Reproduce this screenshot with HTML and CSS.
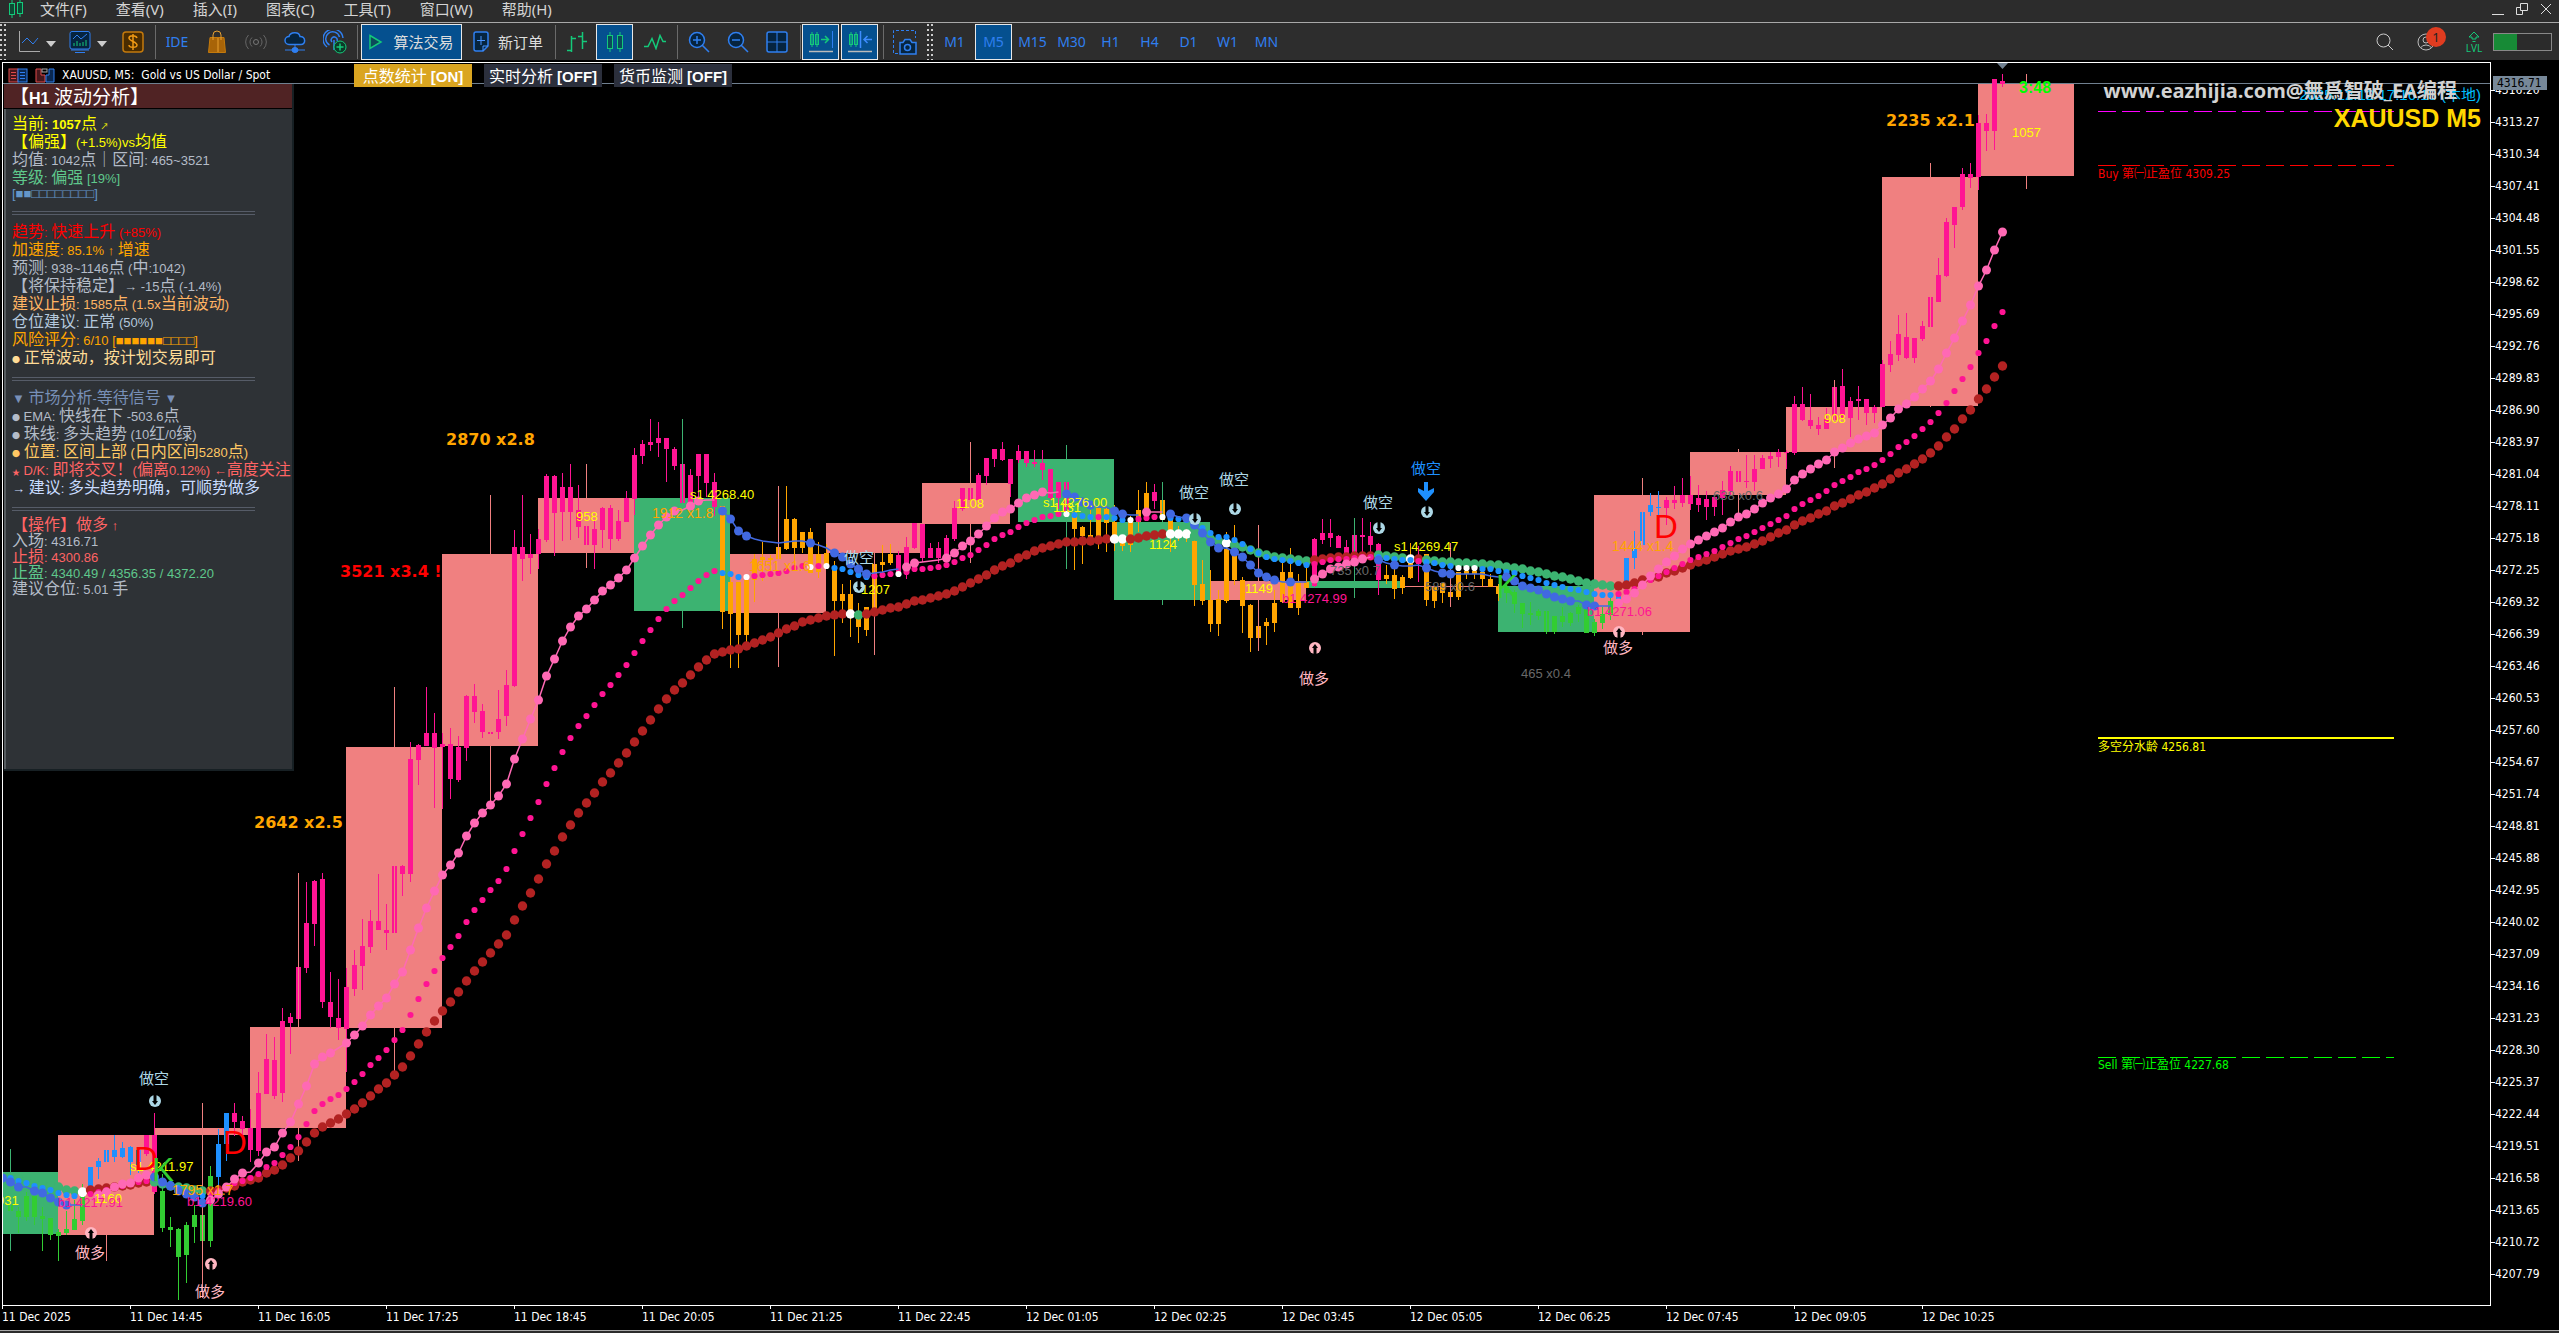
FILE: index.html
```html
<!DOCTYPE html>
<html lang="zh-CN">
<head>
<meta charset="utf-8">
<title>XAUUSD, M5</title>
<link rel="stylesheet" href="styles.css">
</head>
<body>
<header class="menubar">
  <svg class="logo" width="16" height="18" viewBox="0 0 16 18"><path d="M4 0v18M12 0v17" stroke="#14c97a"/><rect x="1.500" y="3.500" width="5" height="11" fill="#0c4a34" stroke="#14c97a"/><rect x="9.500" y="2.500" width="5" height="11" fill="#0c4a34" stroke="#14c97a"/></svg>
  <nav class="menus">
    <a href="#">文件(F)</a><a href="#">查看(V)</a><a href="#">插入(I)</a><a href="#">图表(C)</a><a href="#">工具(T)</a><a href="#">窗口(W)</a><a href="#">帮助(H)</a>
  </nav>
  <div class="winctl">
    <button aria-label="最小化"><svg width="14" height="14"><path d="M1 12.500h12" stroke="#ddd" fill="none"/></svg></button>
    <button aria-label="还原"><svg width="14" height="14"><path d="M5.500 1.500h7v7h-7zM5.500 5.500h-4v7h6v-4" stroke="#ddd" fill="none"/></svg></button>
    <button aria-label="关闭"><svg width="14" height="14"><path d="M2 2l10 10M12 2L2 12" stroke="#ddd" fill="none"/></svg></button>
  </div>
</header>

<div class="toolbar">
  <i class="grip"></i>
  <button class="ic w34" aria-label="图表"><svg width="22" height="22"><path d="M1.500 0v20.500H22" stroke="#aaa"/><path d="M4 12l5-5 6 6 5-6" stroke="#2f7ff0"/></svg></button>
  <i class="drop"></i>
  <button class="ic w34" aria-label="指标"><svg width="24" height="24"><path d="M4 1.500h16a2 2 0 0 1 2 2V17a2 2 0 0 1-2 2H4a2 2 0 0 1-2-2V3.500a2 2 0 0 1 2-2z" fill="#06243f" stroke="#2f7ff0"/><path d="M5 9l4-4 4 4 6-5M7 22.500h10M3 20h18" stroke="#2f7ff0"/><path d="M6 16v-3M9 16v-5M12 16v-3M15 16v-4M18 16v-6" stroke="#14c97a"/></svg></button>
  <i class="drop"></i>
  <button class="ic w38" aria-label="报价"><svg width="22" height="22"><rect x="1" y="1" width="20" height="20" rx="3" fill="#4a2c00" stroke="#c47a0c" stroke-width="1.500"/><path d="M15 7c-1-3-8-3-8 0s8 4 8 7-8 3-8 0M11 3v16" stroke="#f09a14" stroke-width="1.500"/></svg></button>
  <i class="sep"></i>
  <button class="ic w40 blue">IDE</button>
  <button class="ic w38" aria-label="市场"><svg width="20" height="24"><path d="M3 7.500h14l1.500 15h-17z" fill="#a86408" stroke="#c47a0c"/><path d="M6 10V5a4 4 0 0 1 8 0v5M11 8v14" stroke="#e8a030"/></svg></button>
  <button class="ic w38" aria-label="信号"><svg width="22" height="16"><circle cx="11" cy="8" r="2.500" stroke="#777"/><path d="M7 3.500a6 6 0 0 0 0 9M15 3.500a6 6 0 0 1 0 9M3.500 1a10 10 0 0 0 0 14M18.500 1a10 10 0 0 1 0 14" stroke="#666"/></svg></button>
  <button class="ic w40" aria-label="云"><svg width="22" height="22"><path d="M5 13.500a4 4 0 0 1 0-8C6 1 15 0 16 5.500c6 0 6 8 1 8z" fill="#06243f" stroke="#2f7ff0" stroke-width="1.500"/><path d="M11 14v5M1 19h20M8 19a3 2.500 0 0 0 6 0a3 2.500 0 0 0-6 0" stroke="#2f7ff0" fill="#2f7ff0"/></svg></button>
  <button class="ic w38" aria-label="VPS"><svg width="24" height="24"><path d="M4 17A10 10 0 1 1 20 8M6.500 15a7 7 0 1 1 10-8M9 12a3 3 0 1 1 5-1M11 10v10" stroke="#2f7ff0" stroke-width="1.500"/><circle cx="17" cy="17" r="6" fill="#0c3a28" stroke="#14c97a"/><path d="M13.500 17h7M17 13.500v7" stroke="#14c97a" stroke-width="1.500"/></svg></button>
  <i class="sep"></i>
  <button class="ic on algo"><svg width="14" height="16"><path d="M1 1.500l11 6.500-11 6.500z" stroke="#14c97a" fill="#0c4a5a" stroke-width="1.500"/></svg>算法交易</button>
  <button class="ic order"><svg width="17" height="22"><path d="M3 1h10a2 2 0 0 1 2 2v12l-5 5H3a2 2 0 0 1-2-2V3a2 2 0 0 1 2-2z" fill="#06243f" stroke="#2f7ff0" stroke-width="1.500"/><path d="M8 5v9M4 9.500h8M10 20v-5h5" stroke="#4a94ff"/></svg>新订单</button>
  <i class="sep"></i>
  <button class="ic w38" aria-label="柱状图"><svg width="22" height="22"><path d="M5.500 5v16M1 19.500h4M6 7.500h4M16.500 1v17M12 5.500h4M17 10.500h4" stroke="#14c97a" stroke-width="1.500"/></svg></button>
  <button class="ic w37 on" aria-label="蜡烛图"><svg width="18" height="22"><path d="M4 1v20M14 1v20" stroke="#14c97a"/><rect x="1.500" y="4.500" width="5" height="13" fill="#0c4a5a" stroke="#14c97a"/><rect x="11.500" y="4.500" width="5" height="13" fill="#0c4a5a" stroke="#14c97a"/></svg></button>
  <button class="ic w38" aria-label="折线图"><svg width="22" height="16"><path d="M0 12.500h4l4-8 4 10 4-13 3 6h3" stroke="#14c97a" stroke-width="1.500"/></svg></button>
  <i class="sep"></i>
  <button class="ic w38" aria-label="放大"><svg width="22" height="22"><circle cx="9" cy="9" r="7.500" fill="#06243f" stroke="#2f7ff0" stroke-width="1.500"/><path d="M14 14l7 7M5 9h8M9 5v8" stroke="#2f7ff0" stroke-width="1.500"/></svg></button>
  <button class="ic w38" aria-label="缩小"><svg width="22" height="22"><circle cx="9" cy="9" r="7.500" fill="#06243f" stroke="#2f7ff0" stroke-width="1.500"/><path d="M14 14l7 7M5 9h8" stroke="#2f7ff0" stroke-width="1.500"/></svg></button>
  <button class="ic w40" aria-label="平铺"><svg width="22" height="22"><rect x="1" y="1" width="20" height="20" rx="2" fill="#06243f" stroke="#2f7ff0" stroke-width="1.500"/><path d="M11 1v20M1 11h20" stroke="#2f7ff0"/></svg></button>
  <i class="sep"></i>
  <button class="ic w37 on" aria-label="自动滚动"><svg width="26" height="22"><path d="M4 1v15M9 1v15" stroke="#14c97a"/><rect x="2.500" y="3.500" width="3" height="10" stroke="#14c97a"/><rect x="7.500" y="3.500" width="3" height="10" stroke="#14c97a"/><path d="M13 8.500h7M17 5l3.500 3.500L17 12" stroke="#14c97a" stroke-width="1.500"/><path d="M24.500 0v17" stroke="#2f7ff0"/><path d="M1 20.500h24" stroke="#bbb" stroke-width="1.500"/></svg></button>
  <button class="ic w37 on" aria-label="图表平移"><svg width="26" height="22"><path d="M4 1v15M9 1v15" stroke="#14c97a"/><rect x="2.500" y="3.500" width="3" height="10" stroke="#14c97a"/><rect x="7.500" y="3.500" width="3" height="10" stroke="#14c97a"/><path d="M13.500 0v17M25 8.500h-8M20.500 5L17 8.500l3.500 3.500" stroke="#3d8cff" stroke-width="1.500"/><path d="M1 20.500h24" stroke="#bbb" stroke-width="1.500"/></svg></button>
  <i class="sep"></i>
  <button class="ic w40" aria-label="截图"><svg width="26" height="26"><path d="M6 24.500H1.500v-23h22V9" stroke="#2f7ff0" stroke-dasharray="3 2"/><path d="M8 13.500h3l2-3h5l2 3h4V25H8z" fill="#06243f" stroke="#2f7ff0" stroke-width="1.500"/><circle cx="15.500" cy="18.500" r="3" stroke="#2f7ff0" stroke-width="1.500"/></svg></button>
  <i class="grip mid"></i>
  <div class="frames">
    <button class="ic">M1</button><button class="ic on">M5</button><button class="ic">M15</button><button class="ic">M30</button><button class="ic">H1</button><button class="ic">H4</button><button class="ic">D1</button><button class="ic">W1</button><button class="ic">MN</button>
  </div>
  <div class="right">
    <button class="ic find" aria-label="搜索"><svg width="18" height="18"><circle cx="7.500" cy="7.500" r="6.500" stroke="#ccc"/><path d="M12 12l5 5" stroke="#ccc"/></svg></button>
    <button class="ic user" aria-label="账户"><svg width="18" height="18"><circle cx="9" cy="9" r="8" stroke="#bbb"/><circle cx="9" cy="7" r="3" stroke="#bbb"/><path d="M3.500 15a6 5 0 0 1 11 0" stroke="#bbb"/></svg><span class="badge">1</span></button>
    <div class="lvl"><svg width="12" height="12"><path d="M6 1l5 5H8v2H4V6H1zM4.500 10.500h3" stroke="#14c97a" fill="none"/></svg><span>LVL</span></div>
    <div class="meter"><i></i></div>
  </div>
</div>

<main class="window">
  <section class="plot">
    <svg id="chart" viewBox="3 63 2487 1242" preserveAspectRatio="xMinYMin meet">
      <defs>
        <g id="down"><circle r="6"/><path fill="#000" d="M-1.500-6.500h3V0H3L0 4-3 0h1.500z"/></g>
        <g id="up"><circle r="6"/><path fill="#000" d="M-1.500 6.500h3V0H3L0-4-3 0h1.500z"/></g>
      </defs>
      <g shape-rendering="crispEdges">
        <path d="M3 83.500h2487" stroke="#708090"/>
        <g id="hours"></g>
        <g id="bars"></g>
        <g id="wicks"></g>
      </g>
      <g id="slow"></g><g id="mid"></g><g id="fast"></g>
      <path d="M1997 63h11l-5.500 6z" fill="#708090"/>
      <g fill="none" shape-rendering="crispEdges">
        <path d="M2098 111.500h296" stroke="#f0f" stroke-dasharray="18 6"/>
        <path d="M2098 165.500h296" stroke="red" stroke-dasharray="18 6"/>
        <path d="M2098 738h296" stroke="#ff0" stroke-width="2"/>
        <path d="M2098 1057.500h296" stroke="#0f0" stroke-dasharray="18 6"/>
      </g>
      <g class="lvltext">
        <text x="2098" y="178" fill="red">Buy 第㈠止盈位 4309.25</text>
        <text x="2098" y="751" fill="#ff0">多空分水龄 4256.81</text>
        <text x="2098" y="1069" fill="#0f0">Sell 第㈠止盈位 4227.68</text>
      </g>
      <g class="num yellow">
        <text x="-3" y="1205">931</text><text x="94" y="1203">1160</text><text x="130" y="1171">s1 4211.97</text>
        <text x="576" y="521">958</text><text x="690" y="499">s1 4268.40</text><text x="861" y="594">1207</text>
        <text x="956" y="508">1108</text><text x="1053" y="512">1131</text><text x="1043" y="507">s1 4276.00</text>
        <text x="1149" y="549">1124</text><text x="1245" y="593">1149</text><text x="1394" y="551">s1 4269.47</text>
        <text x="1824" y="423">908</text><text x="2012" y="137">1057</text>
      </g>
      <g class="num pink">
        <text x="58" y="1207">b1 4217.91</text><text x="187" y="1206">b1 4219.60</text><text x="1282" y="603">b1 4274.99</text><text x="1587" y="616">b1 4271.06</text>
      </g>
      <g class="num gray">
        <text x="1330" y="575">735 x0.7</text><text x="1425" y="591">589 x0.6</text><text x="1521" y="678">465 x0.4</text><text x="1713" y="500">638 x0.6</text>
      </g>
      <g class="ratio">
        <text x="172" y="1195">1795 x1.7</text><text x="652" y="518">1912 x1.8</text><text x="749" y="571">1651 x1.6</text><text x="1612" y="551">1444 x1.4</text>
      </g>
      <g class="peak">
        <text x="1886" y="126">2235 x2.1</text><text x="446" y="445">2870 x2.8</text><text x="254" y="828">2642 x2.5</text><text x="340" y="577" fill="red">3521 x3.4 !</text>
      </g>
      <g class="cross">
        <text x="134" y="1170">D</text><text x="223" y="1154">D</text><text x="1654" y="538">D</text>
        <text x="152" y="1181" class="k">K</text><text x="1496" y="598" class="k">K</text>
      </g>
      <text class="count" x="2019" y="93">3:48</text>
      <g class="sig sell">
        <text x="139" y="1084">做空</text><use href="#down" x="155" y="1101"/>
        <text x="844" y="563">做空</text><use href="#down" x="859" y="587"/>
        <text x="1179" y="498">做空</text><use href="#down" x="1195" y="519"/>
        <text x="1219" y="485">做空</text><use href="#down" x="1235" y="509"/>
        <text x="1363" y="508">做空</text><use href="#down" x="1379" y="528"/>
        <text x="1411" y="474" fill="#1e90ff">做空</text><use href="#down" x="1427" y="512"/>
        <path d="M1424 482h4v9l6-3v4l-8 9-8-9v-4l6 3z" fill="#1e90ff"/>
      </g>
      <g class="sig buy">
        <text x="75" y="1258">做多</text><use href="#up" x="91" y="1233"/>
        <text x="195" y="1297">做多</text><use href="#up" x="211" y="1264"/>
        <text x="1299" y="684">做多</text><use href="#up" x="1315" y="648"/>
        <text x="1603" y="653">做多</text><use href="#up" x="1619" y="632"/>
      </g>
    </svg>

    <div class="chartbar">
      <div class="caption">
        <svg width="20" height="15"><rect x="1" y="1" width="9" height="13" fill="#46171b" stroke="#e04a4a"/><rect x="10" y="1" width="9" height="13" fill="#0a2850" stroke="#2f7ff0"/><path d="M3 4.500h5M3 7.500h5M3 10.500h5" stroke="#e04a4a"/><path d="M12 4.500h5M12 7.500h5M12 10.500h5" stroke="#2f7ff0"/></svg>
        <svg width="20" height="15"><path d="M1 1h5v6h4v7H1z" fill="#46171b" stroke="#e04a4a"/><path d="M19 1h-5v6h-3v7h8z" fill="#0a2850" stroke="#2f7ff0"/><rect x="7" y="1" width="5" height="3" fill="none" stroke="#aaa"/></svg>
        <span>XAUUSD, M5:&nbsp; Gold vs US Dollar / Spot</span>
      </div>
      <button class="mode active"><span class="zh">点数统计</span> [ON]</button>
      <button class="mode"><span class="zh">实时分析</span> [OFF]</button>
      <button class="mode"><span class="zh">货币监测</span> [OFF]</button>
    </div>

    <aside class="panel">
      <h2><span class="zh">【</span>H1 <span class="zh">波动分析】</span></h2>
      <div class="lines">
        <p class="c-yellow"><span class="zh">当前</span><b>: 1057</b><span class="zh">点</span> <span class="cell">↗</span></p>
        <p class="c-yellow"><span class="zh">【偏强】</span>(+1.5%)vs<span class="zh">均值</span></p>
        <p class="c-silver"><span class="zh">均值</span>: 1042<span class="zh">点｜区间</span>: 465~3521</p>
        <p class="c-green"><span class="zh">等级</span>: <span class="zh">偏强</span> [19%]</p>
        <p class="c-steel">[■■□□□□□□□□]</p>
        <hr>
        <p class="c-red"><span class="zh">趋势</span>: <span class="zh">快速上升</span> (+85%)</p>
        <p class="c-orange"><span class="zh">加速度</span>: 85.1% ↑ <span class="zh">增速</span></p>
        <p class="c-silver"><span class="zh">预测</span>: 938~1146<span class="zh">点</span> (<span class="zh">中</span>:1042)</p>
        <p class="c-silver"><span class="zh">【将保持稳定】</span>→ -15<span class="zh">点</span> (-1.4%)</p>
        <p class="c-sand"><span class="zh">建议止损</span>: 1585<span class="zh">点</span> (1.5x<span class="zh">当前波动</span>)</p>
        <p class="c-blue"><span class="zh">仓位建议</span>: <span class="zh">正常</span> (50%)</p>
        <p class="c-orange"><span class="zh">风险评分</span>: 6/10 [■■■■■■□□□□]</p>
        <p class="c-wheat"><span class="cell">●</span> <span class="zh">正常波动，按计划交易即可</span></p>
        <hr class="wide">
        <p class="c-slate">▼ <span class="zh">市场分析</span>-<span class="zh">等待信号</span> ▼</p>
        <p class="c-silver"><span class="cell">●</span> EMA: <span class="zh">快线在下</span> -503.6<span class="zh">点</span></p>
        <p class="c-silver"><span class="cell">●</span> <span class="zh">珠线</span>: <span class="zh">多头趋势</span> (10<span class="zh">红</span>/0<span class="zh">绿</span>)</p>
        <p class="c-amber"><span class="cell">●</span> <span class="zh">位置</span>: <span class="zh">区间上部</span> (<span class="zh">日内区间</span>5280<span class="zh">点</span>)</p>
        <p class="c-coral"><span class="cell">★</span> D/K: <span class="zh">即将交叉！</span>(<span class="zh">偏离</span>0.12%) ←<span class="zh">高度关注</span></p>
        <p class="c-ice">→ <span class="zh">建议</span>: <span class="zh">多头趋势明确，可顺势做多</span></p>
        <hr class="last">
      </div>
      <div class="lines tight">
        <p class="c-coral"><span class="zh">【操作】做多</span> ↑</p>
        <p class="c-silver"><span class="zh">入场</span>: 4316.71</p>
        <p class="c-coral"><span class="zh">止损</span>: 4300.86</p>
        <p class="c-green"><span class="zh">止盈</span>: 4340.49 / 4356.35 / 4372.20</p>
        <p class="c-silver"><span class="zh">建议仓位</span>: 5.01 <span class="zh">手</span></p>
      </div>
    </aside>

    <div class="corner">
      <div class="clock">2025.12.12 17:16:13 (本地)</div>
      <div class="symbol">XAUUSD M5</div>
      <div class="mark">www.eazhijia.com@無爲智破_EA编程</div>
    </div>
  </section>
  <section class="scale"><ol id="prices"></ol><div class="tag">4316.71</div></section>
  <ol class="times" id="times"></ol>
</main>
<footer class="edge"></footer>
<script src="chart.js"></script>
</body>
</html>
```
FILE: styles.css
```css
* { box-sizing: border-box; }
body {
  margin: 0; height: 100vh; display: flex; flex-direction: column;
  background: #000; color: #ddd; overflow: hidden;
  font-family: "Noto Sans", "Noto Sans CJK SC", sans-serif; font-size: 15px;
}
button { font: inherit; color: inherit; background: none; border: 0; padding: 0; margin: 0; }
ol { list-style: none; margin: 0; padding: 0; }
p, h2, hr { margin: 0; }

.menubar {
  display: flex; align-items: center; flex: none; height: 23px; padding: 0 6px 0 8px;
  background: #2c2c2c; border-bottom: 1px solid #a8a8a8;
}
.menus { display: flex; gap: 29px; margin-left: 16px; flex: 1; line-height: 18px; margin-bottom: 4px; }
.menus a { color: #d4d4d4; text-decoration: none; }
.logo { margin-bottom: 4px; }
.winctl { display: flex; gap: 10px; margin-bottom: 4px; }
.winctl button { display: flex; }

.toolbar {
  display: flex; align-items: center; flex: none; height: 37px; background: #2d2d2d;
}
.toolbar svg { fill: none; flex: none; }
.grip {
  width: 6px; height: 36px; margin-right: 5px; flex: none;
  background: repeating-linear-gradient(#ccc 0 2px, transparent 2px 5px);
  -webkit-mask: linear-gradient(90deg, #000 0 2px, transparent 2px 4px, #000 4px);
  mask: linear-gradient(90deg, #000 0 2px, transparent 2px 4px, #000 4px);
}
.grip.mid { margin: 0 3px 0 2px; }
.sep { width: 1px; height: 34px; background: #6a6a6a; margin: 0 1px 0 3px; flex: none; }
.drop { border: 5px solid transparent; border-top: 6px solid #ccc; border-bottom: 0; margin: 4px 6px 0 0; }
.ic {
  display: flex; align-items: center; justify-content: center; flex: none;
  height: 36px; border: 1px solid transparent; position: relative;
}
.ic.on { background: #05508f; border-color: #e8e8e8; }
.w34 { width: 35px; } .w37 { width: 37px; margin-right: 2px; } .w38 { width: 39px; } .w40 { width: 40px; }
.blue { color: #2f7ff0; font-size: 14px; }
.algo { width: 101px; gap: 10px; margin: 0 2px; }
.order { width: 88px; gap: 8px; }
.frames { display: flex; gap: 2px; font-size: 14px; color: #2f7ff0; }
.frames .ic { width: 37px; }
.right { display: flex; align-items: center; margin-left: auto; padding-right: 7px; }
.find { margin-right: 21px; }
.user { width: 20px; margin-right: 29px; }
.badge {
  position: absolute; left: 9px; top: 2px; width: 20px; height: 20px; border-radius: 50%;
  background: #e03c20; color: #222; font-size: 13px; line-height: 20px;
}
.lvl { display: flex; flex-direction: column; align-items: center; width: 18px; margin-right: 10px; color: #14c97a; font-size: 10px; line-height: 10px; }
.meter { width: 59px; height: 18px; border: 1px solid #888; background: #2b2b2b; }
.meter i { display: block; width: 40%; height: 16px; background: #178a36; }

.window {
  flex: 1; min-height: 0; display: grid; grid-template-columns: 1fr 68px; grid-template-rows: 1fr 24px;
  padding: 2px 0 0 2px;
}
.edge { flex: none; height: 3px; background: #2c2c2c; border-top: 1px solid #a8a8a8; }
.plot { position: relative; border: 1px solid #fff; min-height: 0; overflow: hidden; }
#chart { display: block; width: 100%; height: 100%; }
#chart text { white-space: pre; }
.num { font: 13px "Liberation Sans", sans-serif; }
.ratio { font: 14px "Liberation Sans", sans-serif; fill: #ffa500; }
.yellow { fill: #ff0; } .pink { fill: #ff1493; } .gray { fill: #696969; }
.peak { font: bold 16px "DejaVu Sans", sans-serif; fill: #ffa500; }
.cross { font: 33px "Liberation Sans", sans-serif; fill: red; }
.cross .k { fill: #32cd32; }
.count { font: bold 16px "Liberation Sans", sans-serif; fill: #0f0; }
.sig { font: 15px "Noto Sans CJK SC", sans-serif; }
.sell { fill: #add8e6; } .buy { fill: #ffb6c1; }
.lvltext { font: 12px "DejaVu Sans Condensed", "Noto Sans CJK SC", sans-serif; }

.zh { font-family: "Noto Sans CJK SC", sans-serif; font-size: 16px; font-weight: 400; }
.cell { font-family: "Noto Sans CJK SC", sans-serif; font-size: 8px; }

.chartbar { position: absolute; left: 0; top: 1px; display: flex; gap: 12px; }
.caption {
  display: flex; align-items: center; gap: 7px; width: 339px; padding-left: 5px; height: 22px;
  font: 12px "DejaVu Sans Condensed", sans-serif; color: #fff;
}
.caption span { background: #000; padding-right: 20px; }
.mode {
  width: 118px; height: 23px; background: #2b2f3c; color: #fff;
  font: bold 15px/22px "Liberation Sans", sans-serif; white-space: nowrap;
}
.mode.active { background: #daa520; }

.panel {
  position: absolute; left: 1px; top: 21px; width: 290px; height: 687px;
  background: #2e3236; border: solid #172024; border-width: 0 2px 2px 0;
  box-shadow: inset 2px 0 #565c60; color: #fff;
  font: 13px "Liberation Sans", "Noto Sans CJK SC", sans-serif;
}
.panel h2 {
  height: 25px; padding-left: 6px; background: #502324; border-bottom: 1px solid #000;
  font: bold 16px/23px "Liberation Sans", sans-serif; white-space: nowrap;
}
.panel h2 .zh { font-size: 19px; line-height: 23px; }
.lines { padding: 4px 0 0 8px; }
.lines p { height: 18px; line-height: 18px; white-space: nowrap; }
.lines hr { width: 243px; height: 4px; border: 0; border-top: 4px double #565c68; margin: 8px 0 6px; }
.lines hr.wide { margin: 12px 0 6px; }
.lines hr.last { margin: 12px 0 4px; }
.lines.tight { padding-top: 0; }
.tight p { height: 16px; line-height: 16px; }
.c-yellow { color: #ff0; } .c-silver { color: #b4bcc8; } .c-green { color: #5fc88c; }
.c-steel { color: #6496c8; } .c-red { color: red; } .c-orange { color: #ffa500; }
.c-sand { color: #ffb464; } .c-blue { color: #b4c8dc; } .c-wheat { color: #ffdc96; }
.c-slate { color: #7890b8; } .c-amber { color: #ffc864; } .c-coral { color: #ff6464; } .c-ice { color: #c8dcff; }

.corner { position: absolute; right: 9px; top: 20px; text-align: right; white-space: nowrap; }
.clock { font: 15px/24px "Liberation Sans", "Noto Sans CJK SC", sans-serif; color: #00bfff; }
.symbol { font: bold 25px/22px "Liberation Sans", sans-serif; color: #ffd700; }
.mark {
  position: absolute; right: 24px; top: -4px; color: #d2d2d2;
  font: bold 20px/24px "Open Sans", "Noto Sans CJK TC", sans-serif;
}

.scale { position: relative; font: 12px "DejaVu Sans Condensed", sans-serif; color: #fff; }
.scale ol { padding-top: 12px; }
.scale li { display: flex; align-items: center; height: 32px; }
.scale li::before { content: ""; width: 4px; height: 1px; background: #fff; }
.tag { position: absolute; left: 2px; top: 14px; width: 54px; height: 14px; padding-left: 4px; line-height: 14px; background: #778899; color: #000; }
.times { display: flex; grid-column: 1 / -1; font: 12px/20px "DejaVu Sans Condensed", sans-serif; color: #fff; }
.times li { width: 128px; flex: none; }
.times li::before { content: ""; display: block; width: 1px; height: 3px; background: #fff; margin-bottom: -2px; }
```
FILE: chart.js
```js
const NS = "http://www.w3.org/2000/svg";
const barX = i => 10 + 8 * i;

function add(parent, tag, attrs) {
  const el = document.createElementNS(NS, tag);
  for (const k in attrs) el.setAttribute(k, attrs[k]);
  document.getElementById(parent).appendChild(el);
}

// Hourly candles: left, right, body top, body bottom, colour, high, low
const R = "#f08080", G = "#3cb371";
const hours = [
  [3,58,1172,1234,G,1149,1251],[58,154,1135,1235,R,1135,1261],[154,250,1128,1135,R,1103,1298],
  [250,346,1027,1128,R,873,1161],[346,442,747,1028,R,687,1071],[442,538,554,746,R,495,805],
  [538,634,498,553,R,464,568],[634,730,498,611,G,419,628],[730,826,554,613,R,486,667],
  [826,922,523,553,R,523,655],[922,1010,483,524,R,442,563],[1018,1114,459,522,G,445,569],
  [1114,1210,522,600,G,482,605],[1210,1306,581,600,R,525,651],[1306,1402,581,588,G,518,598],
  [1402,1498,586,587,R,543,607],[1498,1594,586,632,G,586,632],[1594,1690,495,632,R,478,635],
  [1690,1786,452,495,R,449,518],[1786,1882,407,452,R,380,468],[1882,1978,177,406,R,163,407],
  [1978,2074,84,176,R,74,189]
];
for (const [l, r, t, b, c, hi, lo] of hours) {
  add("hours", "rect", { x: l, y: t, width: r - l, height: b - t, fill: c });
  const x = l === 3 ? 10 : l + 48;
  add("wicks", "rect", { x, y: hi, width: 1, height: lo - hi, fill: c });
}

// Five-minute candles: high, body top, body bottom, low
const bars = `1200,1205,1211,1221 1207,1211,1217,1233 1192,1196,1217,1221 1196,1196,1217,1225 1207,1216,1219,1251
1218,1218,1235,1240 1229,1232,1236,1261 1211,1229,1233,1235 1200,1219,1230,1230 1184,1192,1221,1225
1167,1167,1186,1186 1158,1161,1167,1179 1135,1150,1162,1166 1135,1150,1157,1162 1142,1148,1157,1158
1146,1147,1162,1175 1147,1150,1165,1173 1135,1135,1154,1156 1113,1135,1192,1194 1174,1191,1228,1232
1217,1227,1230,1247 1228,1229,1257,1300 1222,1225,1255,1283 1205,1215,1227,1243 1215,1215,1241,1241
1166,1176,1241,1247 1129,1144,1177,1186 1113,1113,1144,1161 1103,1113,1122,1136 1116,1121,1129,1136
1109,1128,1150,1162 1072,1093,1151,1156 1034,1059,1094,1094 1037,1060,1096,1099 1008,1021,1093,1102
1013,1017,1023,1054 967,967,1019,1019 882,923,968,973 880,881,924,946 873,879,1002,1008
972,1002,1017,1028 979,1018,1028,1040 968,987,1029,1072 950,965,989,996 919,946,966,990
910,921,947,953 874,921,930,930 904,930,933,950 859,866,933,939 865,866,874,896
742,759,874,882 744,745,760,785 687,733,746,746 713,733,748,808 733,744,747,809
728,744,779,799 736,747,780,782 695,696,748,761 684,696,712,723 704,711,732,738
701,732,734,734 690,719,732,739 670,685,716,726 530,547,686,687 495,547,559,581
534,554,558,574 529,539,554,569 474,476,540,542 475,476,513,556 473,487,512,541
464,487,512,540 485,510,527,538 526,526,545,545 520,529,545,569 507,508,530,548
505,508,539,550 510,521,539,541 491,498,522,522 448,455,499,515 440,444,456,464
419,442,445,451 422,438,443,457 438,438,449,482 447,449,466,470 464,464,503,513
469,475,505,505 454,454,476,500 454,454,483,497 473,482,507,516 506,506,612,629
570,582,614,668 582,582,635,668 577,580,635,642 554,559,580,602 542,557,560,581
555,558,560,575 540,547,559,566 486,519,549,550 518,519,548,562 532,532,548,553
528,532,573,573 542,554,572,578 544,553,564,569 561,569,601,656 584,594,601,623
580,594,617,637 603,615,627,643 607,607,630,636 564,564,608,608 545,562,565,573
544,554,563,565 551,555,572,572 537,547,572,579 523,523,548,549 524,524,558,562
543,548,558,558 542,548,558,563 535,538,555,560 501,508,539,541 488,488,509,511
488,488,500,500 473,475,500,500 458,458,476,485 449,449,459,467 442,449,460,461
459,459,484,497 445,451,460,463 451,451,463,467 450,462,464,467 450,463,470,480
469,469,498,500 482,482,498,509 471,482,512,512 512,512,529,570 526,527,536,564
510,535,537,540 508,508,539,549 506,509,523,552 505,522,537,551 537,537,546,551
516,521,545,552 490,510,522,532 482,493,511,515 484,492,501,509 500,500,520,520
520,520,531,552 526,530,532,541 529,532,538,542 536,541,585,606 560,584,601,605
570,600,624,632 590,599,624,636 532,549,601,603 525,555,580,585 577,580,606,633
604,605,638,652 626,626,638,638 618,622,626,645 590,603,623,632 562,572,602,603
548,572,608,608 574,582,608,615 557,582,588,588 538,539,586,587 519,533,540,544
519,533,538,547 535,536,548,548 540,547,553,553 535,535,553,553 518,535,537,557
522,536,545,553 543,544,580,595 565,575,579,584 567,575,589,599 575,577,588,594
543,559,578,579 546,555,564,582 554,554,600,606 587,587,601,608 583,583,593,603
592,592,597,597 572,572,597,600 571,571,574,579 571,571,574,579 572,572,579,587
574,579,587,587 584,586,594,601 585,587,593,603 590,592,604,613 603,603,614,628
602,613,615,625 609,611,616,620 608,611,632,634 616,616,632,634 607,616,622,627
612,613,623,626 605,607,614,622 607,607,633,633 619,622,633,636 607,614,623,629
595,601,615,620 592,592,600,600 558,558,582,582 531,549,558,569 504,512,545,546
493,505,512,516 491,507,508,515 497,500,508,525 486,500,503,509 478,495,503,507
476,495,504,510 485,498,505,512 491,499,507,520 497,497,507,516 481,490,498,515
466,471,491,495 471,471,482,490 455,481,482,488 455,469,482,491 455,458,469,469
452,456,459,468 449,452,457,467 450,452,453,469 396,404,453,455 387,404,420,421
394,420,426,429 417,425,429,435 408,419,429,429 387,387,420,432 369,386,418,418
397,401,418,437 386,399,401,420 399,399,413,425 405,407,413,423 360,364,407,407
341,354,365,372 315,334,355,361 313,337,358,359 338,338,358,363 321,326,339,341
295,297,327,328 258,275,302,302 218,222,276,277 207,207,225,248 168,174,207,210
163,174,178,188 115,123,177,190 114,123,131,151 79,79,131,150 74,81,84,87`.split(/\s+/).map(s => s.split(",").map(Number));

// Trend colour of each run of bars, by last index
const L = "#32cd32", B = "#1e90ff", P = "#ff1493", O = "#ffa500";
const runs = [[9,L],[16,B],[18,P],[25,L],[27,B],[88,P],[110,O],[132,P],[142,O],[143,P],[162,O],[171,P],[175,O],[176,P],[186,O],[200,L],[206,B],[249,P]];
bars.forEach(([hi, t, b, lo], i) => {
  const fill = runs.find(r => i <= r[0])[1], x = barX(i);
  add("bars", "rect", { x, y: hi, width: 1, height: Math.max(1, lo - hi), fill });
  add("bars", "rect", { x: x - 2, y: t, width: 5, height: b - t, fill });
});

const nums = s => s.trim().split(/\s+/).map(Number);
const pick = (rs, i) => rs.find(r => i <= r[0])[1];
function dots(group, ys, first, r, colours, white, hidden) {
  ys.forEach((y, k) => {
    const i = k + first;
    if (hidden && hidden.has(i)) return;
    add(group, "circle", { cx: barX(i) + 0.5, cy: y, r, fill: white.has(i) ? "#fff" : pick(colours, i) });
  });
}

const slow = nums(`1177 1179 1181 1183 1185 1186 1187 1190 1191 1192 1190 1189 1188 1187 1186 1185 1183 1182 1182 1184 1186 1187 1188 1190 1191 1191 1190 1188 1186 1182
1180 1178 1173 1170 1165 1158 1151 1142 1133 1127 1123 1119 1114 1109 1103 1096 1089 1083 1075 1067
1056 1044 1032 1021 1011 1002 992 981 971 962 953 944 935 920 906 893 879 864 851 837 825 813 803 793 782 773 763 753 742 731
720 709 699 690 683 675 667 660 654 652 650 649 646 643 640 637 633 629 626 622 620 618 616 615 614 614 615 614 612 610
608 607 604 601 600 598 596 594 591 587 583 579 575 570 566 563 558 555 551 548 546 544 542 542 541 541 540 539 539 539
539 538 536 535 534 534 534 534 536 538 539 541 543 545 547 550 553 555 557 558 559 560 561 560 559 558 557 557 556 556
556 555 556 557 558 559 559 560 561 562 562 563 563 564 564 565 565 567 568 569 571 572 574 576 577 579 581 583 584 585
586 586 585 583 580 578 577 573 571 568 565 562 560 557 554 551 549 547 544 541 537 533 530 525 521 518 514 511 506 503
499 495 492 488 484 479 473 469 464 459 453 446 437 429 419 410 399 389 377 366`);
dots("slow", slow, 0, 4.7, [[8,G],[17,"#b22222"],[24,G],[105,"#b22222"],[106,G],[147,"#b22222"],[162,G],[170,"#b22222"],[175,G],[176,"#b22222"],[200,G],[249,"#b22222"]],
  new Set([9,105,138,139,145,146,147,152,175]));

const mid = nums(`1178 1181 1183 1186 1188 1190 1193 1195 1196 1194 1194 1192 1190 1188 1186 1184 1182 1181 1178 1181 1184 1188 1192 1196 1196 1194 1191 1187 1183 1181
1178 1174 1167 1163 1155 1147 1137 1124 1111 1104 1099 1095 1089 1082 1074 1065 1058 1050 1040 1030
1015 999 984 971 958 947 936 922 910 900 890 881 869 851 834 818 802 784 768 752 738 726 716 705 694 685 675 665 653 641
630 619 609 601 595 588 581 575 571 573 574 577 577 576 575 574 573 571 568 566 567 566 566 568 569 572 575 577 576 575
574 574 572 569 569 568 567 565 562 558 555 550 545 539 535 532 527 523 520 517 516 514 514 515 516 517 517 517 518 520
520 519 518 517 517 518 519 520 523 528 533 537 537 540 544 549 553 557 559 560 561 563 565 564 562 560 559 559 558 557
557 557 558 559 560 560 561 562 563 565 566 568 568 568 569 569 571 572 573 576 578 580 583 585 587 589 590 592 594 595
595 594 592 589 585 580 576 572 568 564 560 557 554 551 547 543 539 536 532 528 524 520 516 509 504 500 496 491 485 481
477 472 469 465 460 454 447 442 436 429 422 413 403 391 379 367 353 341 326 312`);
dots("mid", mid, 0, 3.1, [[8,B],[17,P],[24,B],[88,P],[92,B],[102,P],[107,B],[132,P],[135,B],[136,P],[140,B],[143,P],[162,B],[170,P],[175,B],[176,P],[200,B],[249,P]],
  new Set([9,92,100,102,111,132,140,144,181,182,183]));

const fast = nums(`1178 1182 1187 1187 1191 1193 1198 1202 1205 1205 1205 1201 1195 1192 1187 1184 1183 1178 1175 1177 1182 1186 1191 1194 1197 1203 1200 1194 1187 1179 1173
1172 1163 1152 1147 1133 1122 1104 1086 1064 1057 1053 1048 1043 1035 1026 1015 1006 998 984 972
950 928 908 891 875 865 853 836 823 813 805 796 784 759 739 719 700 676 659 641 627 616 609 600 591 585 578 570 558 546
535 525 517 511 510 506 501 500 500 511 519 531 536 539 541 542 543 542 541 541 543 545 548 553 557 564 569 574 573 572
570 569 567 563 562 561 560 558 553 546 541 534 526 518 512 509 503 498 495 492 493 492 494 497 502 505 507 507 511 514
515 515 512 512 512 514 517 518 525 533 542 548 548 552 557 565 573 577 580 582 582 582 582 579 574 569 567 564 562 559
557 560 563 565 566 566 565 568 571 573 574 574 574 574 574 576 577 577 581 586 588 590 594 597 599 601 601 605 606 606
606 603 599 593 585 576 569 562 556 549 544 540 536 532 528 522 517 514 509 503 498 494 489 480 474 469 464 460 452 448
443 439 436 433 425 418 409 404 397 389 381 369 353 338 321 305 286 270 250 232`);
const RB = "#4169e1", HP = "#ff69b4";
const fastRuns = [[9,RB],[17,HP],[24,RB],[88,HP],[111,RB],[131,HP],[141,RB],[144,HP],[162,RB],[170,HP],[200,RB],[249,HP]];
let from = -1;
for (const [to, c] of fastRuns) {
  let pts = "";
  for (let i = from; i <= to; i++) pts += `${barX(i) + 0.5},${fast[i + 1]} `;
  add("fast", "polyline", { points: pts, fill: "none", stroke: c, "stroke-width": 1.5 });
  from = to + 1;
}
dots("fast", fast, -1, 4.5, fastRuns, new Set(),
  new Set([2,8,9,10,30,41,84,87,88,93,94,95,96,97,98,99,101,102,108,109,110,111,114,115,116,130,131,136,137,140,141,143,144,146,152,159,161,162,170,172,174,175,176,178,181,182,183,184,185,186,196,199,200]));

const prices = document.getElementById("prices");
for (let k = 0; k < 38; k++) {
  const li = document.createElement("li");
  li.textContent = (4316.20 - 2.93 * k).toFixed(2);
  prices.appendChild(li);
}
const times = ["11 Dec 2025","11 Dec 14:45","11 Dec 16:05","11 Dec 17:25","11 Dec 18:45","11 Dec 20:05","11 Dec 21:25","11 Dec 22:45","12 Dec 01:05","12 Dec 02:25","12 Dec 03:45","12 Dec 05:05","12 Dec 06:25","12 Dec 07:45","12 Dec 09:05","12 Dec 10:25"];
for (const t of times) {
  const li = document.createElement("li");
  li.textContent = t;
  document.getElementById("times").appendChild(li);
}
```
